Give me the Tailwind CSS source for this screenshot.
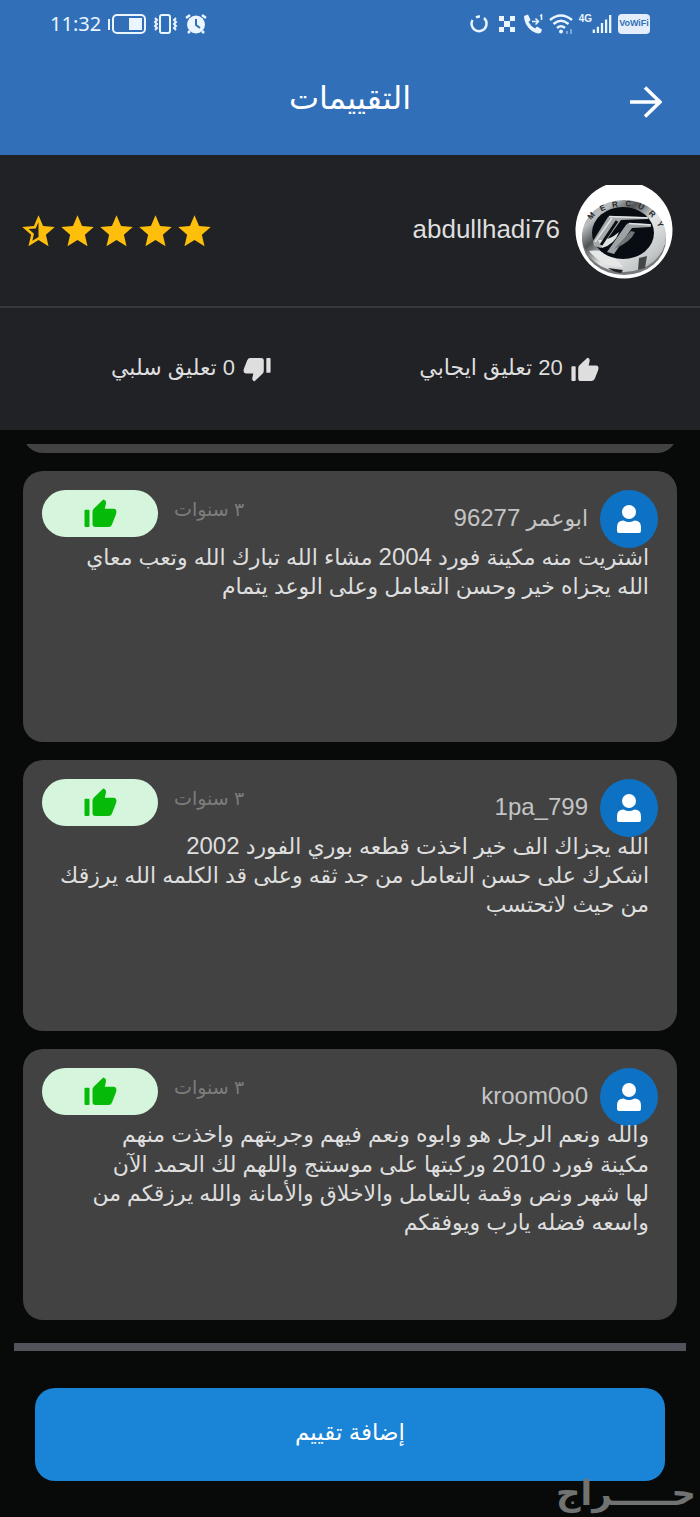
<!DOCTYPE html>
<html lang="ar" dir="rtl">

<head>
    <meta charset="utf-8">
    <title>التقييمات</title>
    <meta name="viewport" content="width=device-width, initial-scale=1.0" />
    <script src="https://cdn.jsdelivr.net/npm/@tailwindcss/browser@4"></script>
</head>

<body class="relative min-h-screen flex flex-col bg-[#080a09] text-[#dedede] font-['Liberation_Sans','DejaVu_Sans',sans-serif]">
    <!-- shared icons -->
    <svg class="hidden" xmlns="http://www.w3.org/2000/svg">
        <symbol id="thumb" viewBox="0 0 33 29">
            <path d="M.5 11.5Q.5 10.700 1.500 10.700H4.500Q5.500 10.700 5.500 11.700V27Q5.500 28 4.500 28H1.500Q.5 28 .5 27Z" />
            <path d="M8.500 13Q8.500 11 9.700 9.800L19 .8Q19.500 .3 20.500 .9Q22.500 2 22 4.500L20.800 9.800H29.500Q32.500 10 32.400 13Q32.300 14.500 31.500 16.500L28 25.500Q27 28 24.500 28H11.500Q8.500 28 8.500 25Z" />
        </symbol>
        <symbol id="person" viewBox="0 0 24 28">
            <circle cx="12" cy="7" r="7" />
            <path d="M0 22Q0 15.500 6.500 15.500Q12 18.500 17.500 15.500Q24 15.500 24 22V26Q24 28 22 28H2Q0 28 0 26Z" />
        </symbol>
        <symbol id="star" viewBox="0 0 24 24">
            <path d="M12 17.270L18.180 21l-1.640-7.030L22 9.240l-7.190-.61L12 2 9.190 8.630 2 9.240l5.460 4.730L5.820 21z" />
        </symbol>
    </svg>

    <header class="bg-[#3170b9] text-white">
        <div dir="ltr" class="flex items-center justify-between h-12 px-[50px] text-[#eaf5ff]">
            <div class="flex items-center gap-[7px]">
                <span class="text-xl font-['Noto_Sans','Liberation_Sans',sans-serif]">11:32</span>
                <svg class="w-[38px] h-5" viewBox="0 0 38 20" fill="none" stroke="currentColor" stroke-width="2">
                    <path d="M1 5v11" />
                    <rect x="5" y="1" width="32" height="18" rx="4" />
                    <rect x="22" y="5" width="11" height="10" fill="currentColor" />
                </svg>
                <svg class="w-[25px] h-5" viewBox="0 0 25 20" fill="none" stroke="currentColor" stroke-width="2">
                    <rect x="7" y="1" width="10" height="18" rx="2" />
                    <path d="M2 4l2 2-2 2 2 2-2 2 2 2-2 2M23 4l-2 2 2 2-2 2 2 2-2 2 2 2" />
                </svg>
                <svg class="w-[22px] h-5" viewBox="0 0 22 20">
                    <circle cx="11" cy="10.500" r="9" fill="currentColor" />
                    <path d="M1 4l4-3M17 1l4 3M5 17l-2 2M17 17l2 2" stroke="currentColor" stroke-width="2.500" />
                    <path d="M11 5v6l4 3" stroke="#3170b9" stroke-width="2" fill="none" />
                </svg>
            </div>
            <div class="flex items-center gap-1.5">
                <svg class="w-5 h-5 mr-1" viewBox="0 0 20 20" fill="none" stroke="currentColor" stroke-width="2.500">
                    <path d="M15 4A7.500 7.500 0 1 1 3.500 6M7 3.500Q9 2.400 11 2.500" />
                </svg>
                <svg class="w-[18px] h-4" viewBox="0 0 18 16" fill="currentColor">
                    <path d="M0 0h5v5H0zM11 0h5v5h-5zM5 5h6v6H5zM0 11h5v5H0zM11 11h5v5h-5z" />
                </svg>
                <svg class="w-5 h-5" viewBox="0 0 20 20">
                    <path d="M1 2L5 .5 7.500 6 5.500 8Q8 12.500 12 14.500L14 12.500 19 15.500 18 18.500Q15 21 9 17Q1 11 1 2Z" fill="currentColor" />
                    <path d="M9 7.500h6M12.500 4.500l3 3-3 3M17 2l1.500-1v5" stroke="currentColor" stroke-width="1.500" fill="none" />
                </svg>
                <svg class="w-6 h-5" viewBox="0 0 24 20" fill="none" stroke="currentColor" stroke-width="2.500">
                    <path d="M1 6Q12-3 23 6M4.500 10Q12 3.500 19.500 10M8 14Q12 10.500 16 14" />
                    <circle cx="12" cy="17.500" r="2" fill="currentColor" stroke="none" />
                    <path d="M18 20v-3M22 20v-5" stroke-width="2" opacity=".4" />
                </svg>
                <div class="flex items-start h-5">
                    <span class="text-[10px] leading-[10px] font-bold">4G</span>
                    <svg class="w-5 h-5" viewBox="0 0 22 20" stroke="currentColor" stroke-width="2.500">
                        <path d="M2 20v-4M6.500 20v-7M11 20V9M15.500 20V5M20 20V0" />
                    </svg>
                </div>
                <span class="w-8 h-5 flex items-center justify-center rounded bg-[#e4eefb] text-[#3170b9] text-[9px] font-bold">VoWiFi</span>
            </div>
        </div>
        <div class="grid grid-cols-[1fr_auto_1fr] items-center h-[107px] px-[38px]">
            <button type="button" aria-label="رجوع" class="w-8 h-8">
                <svg class="w-8 h-8" viewBox="0 0 32 32" fill="none" stroke="currentColor" stroke-width="3.500">
                    <path d="M0 16H30M15 1.500L30 16L15 30.500" />
                </svg>
            </button>
            <h1 class="text-[32px] leading-10 pb-2">التقييمات</h1>
        </div>
    </header>

    <section class="bg-[#212226] h-[153px] pt-0.5 flex items-center justify-between pr-[27px] pl-[19px] border-b-2 border-[#37383b]">
        <div class="flex items-center gap-[15px]">
            <svg class="w-[98px] h-24" viewBox="0 0 98 96">
                <defs>
                    <linearGradient id="chrome" x1="0" y1="0" x2="1" y2="1">
                        <stop offset="0" stop-color="#8f9496" />
                        <stop offset=".2" stop-color="#b9bdbe" />
                        <stop offset=".35" stop-color="#505456" />
                        <stop offset=".55" stop-color="#e4e6e7" />
                        <stop offset=".8" stop-color="#c4c7c8" />
                        <stop offset="1" stop-color="#8a8d8e" />
                    </linearGradient>
                    <path id="rim" d="M16 36Q26 23 50 22Q78 23 87 52" />
                </defs>
                <path d="M31 1H67A48.500 48.500 0 1 1 31 1Z" fill="#fff" />
                <ellipse cx="49" cy="55" rx="42" ry="36" fill="#77797a" />
                <ellipse cx="49" cy="52" rx="42" ry="36" fill="url(#chrome)" />
                <path d="M14 67Q34 64 48 83Q28 84 14 67Z" fill="#e6e8e8" />
                <path d="M64 74L72 72 70 84 63 86Z" fill="#444748" />
                <path d="M33 84L48 86 46 89Q38 88 33 84Z" fill="#202223" />
                <ellipse cx="48" cy="49" rx="31" ry="26" fill="#070d12" />
                <path d="M18 57L33 33Q34 32 36 32L72 33L74 35L46 36L26 64L19 62Z" fill="#a4a9ab" />
                <path d="M23 56Q34 57 44 48Q40 60 27 64Z" fill="#dfe4e3" />
                <path d="M32 68L51 41Q52 39 55 39L75 40L76 43L57 44L39 70Z" fill="#9da2a5" />
                <path d="M20 58L37 34" stroke="#dfe2e3" stroke-width="1.500" />
                <path d="M26 61L42 37" stroke="#0c1115" stroke-width="3" />
                <path d="M34 32.500L73 34M54 39.500L76 41" stroke="#e0e3e4" stroke-width="1.500" />
                <path d="M39 65Q56 58 60 48L56 47Z" fill="#6f7578" />
                <text font-size="8" font-weight="bold" fill="#252a2d" direction="ltr">
                    <textPath href="#rim">M&#160;&#160;&#160;E&#160;&#160;&#160;R&#160;&#160;&#160;C&#160;&#160;&#160;U&#160;&#160;&#160;R&#160;&#160;&#160;Y</textPath>
                </text>
            </svg>
            <h2 class="text-[26px] leading-8 pb-1.5">abdullhadi76</h2>
        </div>
        <div class="flex fill-[#fdbf0b]" role="img" aria-label="4.5">
            <svg class="size-[39px]"><use href="#star" /></svg>
            <svg class="size-[39px]"><use href="#star" /></svg>
            <svg class="size-[39px]"><use href="#star" /></svg>
            <svg class="size-[39px]"><use href="#star" /></svg>
            <svg class="size-[39px] -scale-x-100" viewBox="0 0 24 24">
                <path d="M22 9.240l-7.190-.62L12 2 9.190 8.630 2 9.240l5.460 4.730L5.820 21 12 17.270 18.180 21l-1.630-7.030L22 9.240zM12 15.400V6.100l1.710 4.040 4.380.38-3.320 2.880 1 4.280L12 15.400z" />
            </svg>
        </div>
    </section>

    <section class="bg-[#212226] h-[122px] px-8 grid grid-cols-2 items-center">
        <div class="flex items-center justify-center gap-2">
            <svg class="w-7 h-[25px] fill-[#dedede]"><use href="#thumb" /></svg>
            <p class="text-[22px] leading-8 pb-0.5">20 تعليق ايجابي</p>
        </div>
        <div class="flex items-center justify-center gap-2">
            <svg class="w-7 h-[25px] fill-[#dedede] rotate-180"><use href="#thumb" /></svg>
            <p class="text-[22px] leading-8 pb-0.5">0 تعليق سلبي</p>
        </div>
    </section>

    <main class="mt-[14px] px-[23px] pb-[23px] flex flex-col gap-[18px] overflow-hidden">
        <!-- end of the review scrolled past the top -->
        <div class="h-[9px] overflow-hidden flex flex-col justify-end">
            <div class="h-10 shrink-0 rounded-[20px] bg-[#424242]"></div>
        </div>

        <article class="h-[271px] rounded-[20px] bg-[#424242] p-[19px]">
            <div class="flex items-start">
                <span class="size-[58px] rounded-full bg-[#0d72c4] flex items-center justify-center">
                    <svg class="w-6 h-7 fill-white"><use href="#person" /></svg>
                </span>
                <h3 class="mr-3 pt-3 text-[22px] leading-8 text-[#c4c4c4]">ابوعمر <span class="text-2xl leading-8">96277</span></h3>
                <time class="mr-auto pt-1 text-[19px] leading-8 text-[#7d7d7d]">٣ سنوات</time>
                <span class="mr-4 w-[116px] h-[47px] rounded-full bg-[#d5f5dd] flex items-center justify-center">
                    <svg class="w-[33px] h-[29px] fill-[#06ba08]"><use href="#thumb" /></svg>
                </span>
            </div>
            <p class="relative -mt-1.5 px-[9px] text-[22px] leading-[29px] whitespace-nowrap">
                اشتريت منه مكينة فورد <span class="text-2xl leading-[29px]">2004</span> مشاء الله تبارك الله وتعب معاي<br>
                الله يجزاه خير وحسن التعامل وعلى الوعد يتمام
            </p>
        </article>

        <article class="h-[271px] rounded-[20px] bg-[#424242] p-[19px]">
            <div class="flex items-start">
                <span class="size-[58px] rounded-full bg-[#0d72c4] flex items-center justify-center">
                    <svg class="w-6 h-7 fill-white"><use href="#person" /></svg>
                </span>
                <h3 class="mr-3 pt-3 text-2xl leading-8 text-[#c4c4c4]">1pa_799</h3>
                <time class="mr-auto pt-1 text-[19px] leading-8 text-[#7d7d7d]">٣ سنوات</time>
                <span class="mr-4 w-[116px] h-[47px] rounded-full bg-[#d5f5dd] flex items-center justify-center">
                    <svg class="w-[33px] h-[29px] fill-[#06ba08]"><use href="#thumb" /></svg>
                </span>
            </div>
            <p class="relative -mt-1.5 px-[9px] text-[22px] leading-[29px] whitespace-nowrap">
                الله يجزاك الف خير اخذت قطعه بوري الفورد <span class="text-2xl leading-[29px]">2002</span><br>
                اشكرك على حسن التعامل من جد ثقه وعلى قد الكلمه الله يرزقك<br>
                من حيث لاتحتسب
            </p>
        </article>

        <article class="h-[271px] rounded-[20px] bg-[#424242] p-[19px]">
            <div class="flex items-start">
                <span class="size-[58px] rounded-full bg-[#0d72c4] flex items-center justify-center">
                    <svg class="w-6 h-7 fill-white"><use href="#person" /></svg>
                </span>
                <h3 class="mr-3 pt-3 text-2xl leading-8 text-[#c4c4c4]">kroom0o0</h3>
                <time class="mr-auto pt-1 text-[19px] leading-8 text-[#7d7d7d]">٣ سنوات</time>
                <span class="mr-4 w-[116px] h-[47px] rounded-full bg-[#d5f5dd] flex items-center justify-center">
                    <svg class="w-[33px] h-[29px] fill-[#06ba08]"><use href="#thumb" /></svg>
                </span>
            </div>
            <p class="relative -mt-1.5 px-[9px] text-[22px] leading-[29px] whitespace-nowrap">
                والله ونعم الرجل هو وابوه ونعم فيهم وجربتهم واخذت منهم<br>
                مكينة فورد <span class="text-2xl leading-[29px]">2010</span> وركبتها على موستنج واللهم لك الحمد الآن<br>
                لها شهر ونص وقمة بالتعامل والاخلاق والأمانة والله يرزقكم من<br>
                واسعه فضله يارب ويوفقكم
            </p>
        </article>
    </main>

    <footer class="px-[14px]">
        <div class="h-2 bg-[#52525a]"></div>
        <div class="pt-[37px] pb-9 px-[21px]">
            <button type="button" class="w-full h-[93px] pb-1 rounded-[20px] bg-[#1a84d6] text-white text-[23px]">إضافة تقييم</button>
        </div>
    </footer>

    <div class="absolute right-1 bottom-1 text-[34px] leading-[40px] font-bold text-[#707372]">حـــــراج</div>
</body>

</html>
